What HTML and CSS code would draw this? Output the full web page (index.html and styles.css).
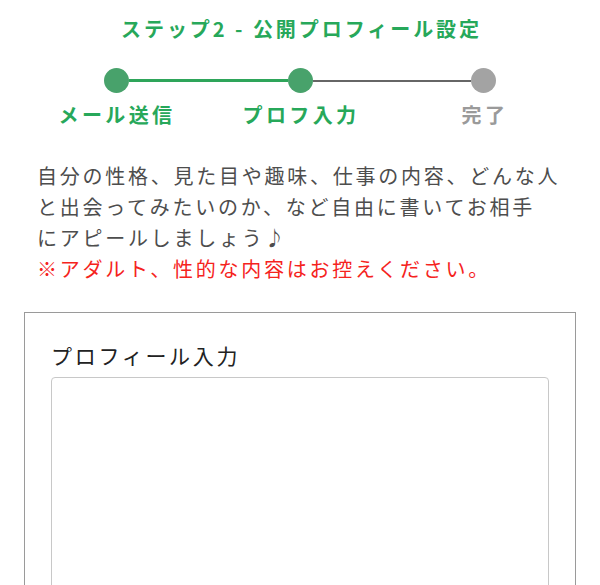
FILE: index.html
```html
<!DOCTYPE html>
<html lang="ja">
<head>
<meta charset="utf-8">
<title>ステップ2 - 公開プロフィール設定</title>
<link rel="stylesheet" href="styles.css">
</head>
<body>
<main class="page">
  <h1 class="title">ステップ2 - 公開プロフィール設定</h1>
  <div class="stepper">
    <div class="track">
      <span class="dot dot-done"></span>
      <span class="bar bar-done"></span>
      <span class="dot dot-done"></span>
      <span class="bar bar-todo"></span>
      <span class="dot dot-todo"></span>
    </div>
    <div class="labels">
      <span class="label label-done">メール送信</span>
      <span class="label label-done">プロフ入力</span>
      <span class="label label-todo">完了</span>
    </div>
  </div>
  <p class="intro">自分の性格、見た目や趣味、仕事の内容、どんな人<br>と出会ってみたいのか、など自由に書いてお相手<br>にアピールしましょう♪<br><span class="warn">※アダルト、性的な内容はお控えください。</span></p>
  <section class="card">
    <label class="card-label" for="profile">プロフィール入力</label>
    <textarea id="profile" class="card-input"></textarea>
  </section>
</main>
</body>
</html>
```

FILE: styles.css
```css
html, body {
  margin: 0;
  padding: 0;
  background: #ffffff;
}

body {
  font-family: "Noto Sans CJK JP", "Noto Sans", sans-serif;
  overflow: hidden;
}

.page {
  padding: 0 24px;
}

.title {
  margin: 0;
  padding-top: 14px;
  padding-left: 3px;
  font-size: 20px;
  line-height: 30px;
  font-weight: 700;
  letter-spacing: 2.95px;
  text-align: center;
  color: #27a85a;
}

.stepper {
  margin-top: 24px;
}

.track {
  display: flex;
  align-items: center;
  margin: 0 80px;
  height: 25px;
}

.dot {
  flex: none;
  width: 25px;
  height: 25px;
  border-radius: 50%;
}

.dot-done {
  background: #48a26b;
}

.dot-todo {
  background: #a3a3a3;
}

.bar {
  flex: 1;
}

.bar-done {
  height: 3px;
  background: #2ea55a;
}

.bar-todo {
  height: 2px;
  background: #666666;
}

.labels {
  display: grid;
  grid-template-columns: repeat(3, 1fr);
  margin-top: 8px;
}

.label {
  text-align: center;
  font-size: 20px;
  line-height: 28px;
  font-weight: 700;
  letter-spacing: 3.4px;
  padding-left: 2px;
}

.label-done {
  color: #27a85a;
}

.label-todo {
  color: #9a9a9a;
}

.intro {
  margin: 31px 0 0;
  padding-left: 13px;
  font-size: 20px;
  line-height: 31px;
  letter-spacing: 2.75px;
  color: #4d4d4d;
  white-space: nowrap;
}

.warn {
  color: #f5231d;
}

.card {
  margin-top: 28px;
  border: 1px solid #9a9a9a;
  padding: 27px 26px 0;
  display: flex;
  flex-direction: column;
}

.card-label {
  font-size: 21px;
  line-height: 30px;
  letter-spacing: 2.7px;
  color: #222222;
}

.card-input {
  margin-top: 7px;
  height: 320px;
  border: 1px solid #c8c8c8;
  border-radius: 4px;
  resize: none;
  padding: 8px;
  font: inherit;
  background: #ffffff;
}
```
